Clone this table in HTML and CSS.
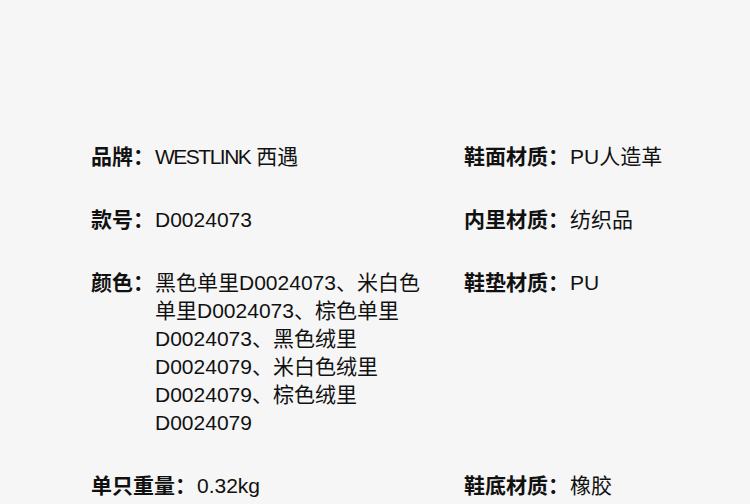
FILE: index.html
```html
<!DOCTYPE html>
<html lang="zh-CN">
<head>
<meta charset="utf-8">
<link rel="stylesheet" href="styles.css">
</head>
<body>
<div class="specs">
  <div class="item"><span class="label">品牌：</span><span class="value"><span class="brand">WESTLINK</span> 西遇</span></div>
  <div class="item"><span class="label">鞋面材质：</span><span class="value">PU人造革</span></div>
  <div class="item"><span class="label">款号：</span><span class="value">D0024073</span></div>
  <div class="item"><span class="label">内里材质：</span><span class="value">纺织品</span></div>
  <div class="item"><span class="label">颜色：</span><span class="value narrow">黑色单里D0024073、米白色单里D0024073、棕色单里D0024073、黑色绒里D0024079、米白色绒里D0024079、棕色绒里D0024079</span></div>
  <div class="item"><span class="label">鞋垫材质：</span><span class="value">PU</span></div>
  <div class="item"><span class="label">单只重量：</span><span class="value">0.32kg</span></div>
  <div class="item"><span class="label">鞋底材质：</span><span class="value">橡胶</span></div>
</div>
</body>
</html>
```

FILE: styles.css
```css
html, body {
  margin: 0;
  padding: 0;
  background: #f6f6f6;
}
body {
  font-family: "Liberation Sans", "Noto Sans CJK SC", sans-serif;
  font-size: 21px;
  line-height: 28px;
  color: #111;
}
.specs {
  display: grid;
  grid-template-columns: 373px 1fr;
  row-gap: 35px;
  padding: 143px 0 0 91px;
}
.item {
  display: flex;
  align-items: flex-start;
}
.label {
  font-weight: bold;
  white-space: nowrap;
  flex: none;
}
.value {
  margin-left: 1px;
}
.brand {
  letter-spacing: -1.5px;
}
.narrow {
  width: 274px;
}
```
